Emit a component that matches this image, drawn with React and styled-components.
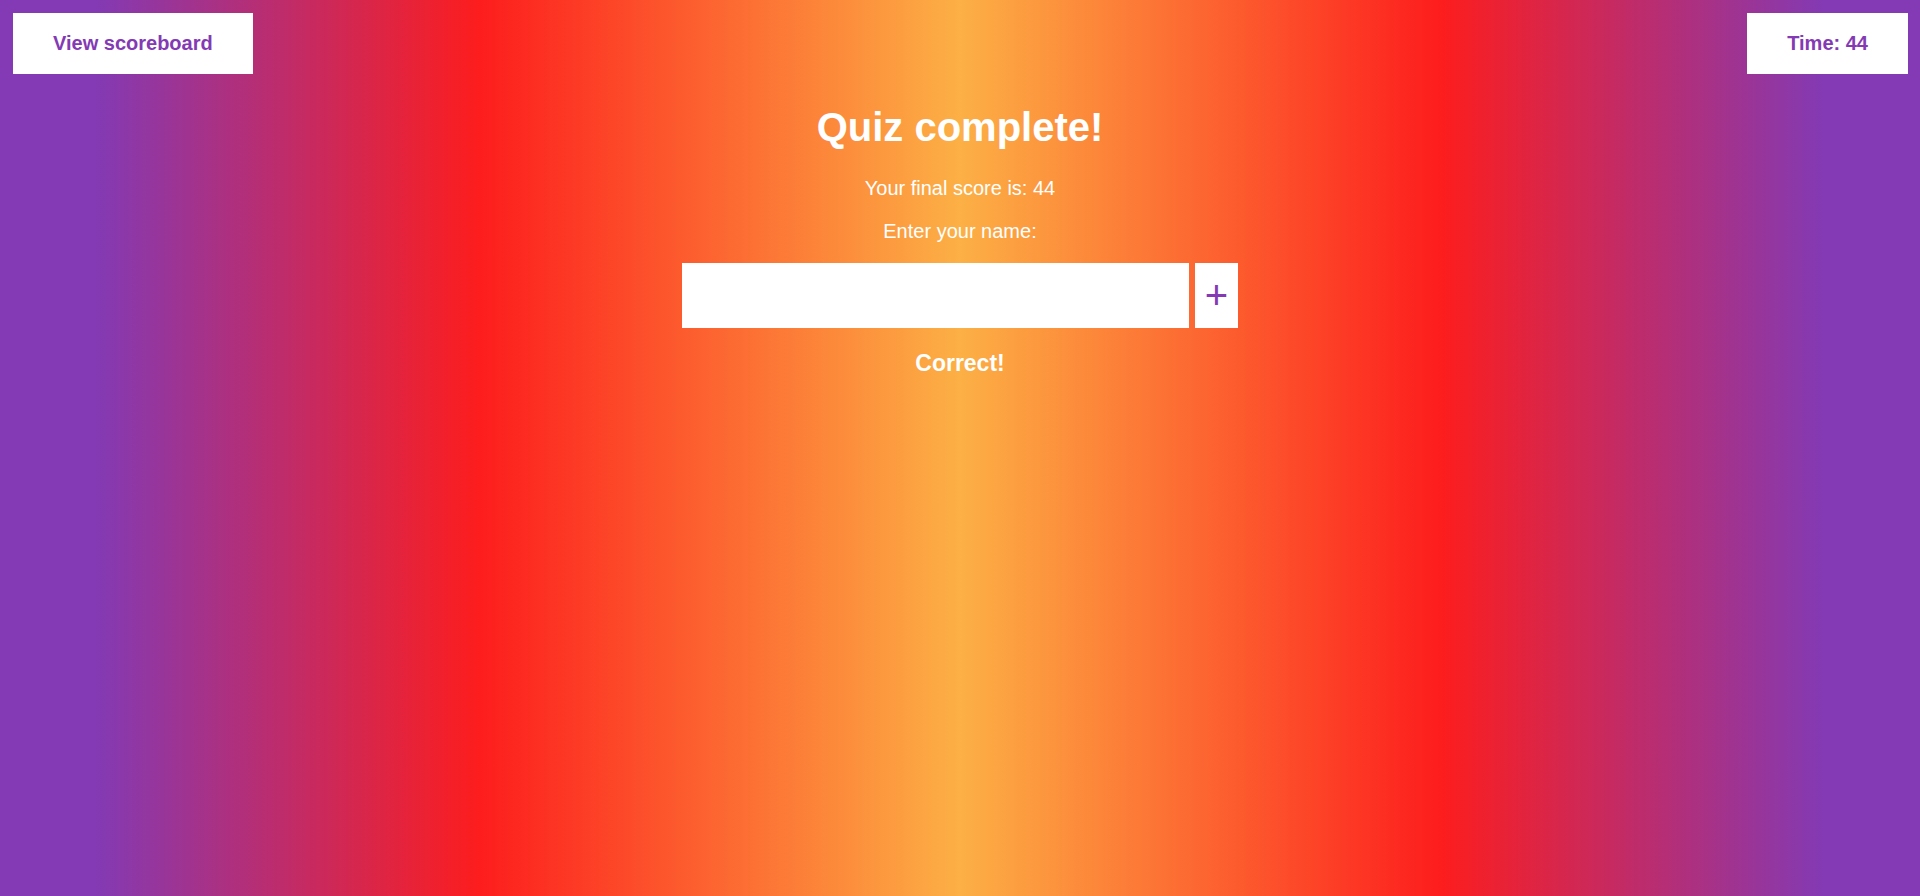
import React, { useState } from "react";
import styled, { createGlobalStyle } from "styled-components";

const GlobalStyle = createGlobalStyle`
  * {
    box-sizing: border-box;
  }

  body {
    margin: 0;
    font-family: Arial, "Liberation Sans", sans-serif;
    font-size: 20px;
    line-height: 23px;
    color: #ffffff;
  }
`;

const Page = styled.div`
  min-height: 100vh;
  background: linear-gradient(
    90deg,
    #833ab4 5%,
    #fd1d1d 25%,
    #fcb045 50%,
    #fd1d1d 75%,
    #833ab4 95%
  );
`;

const TopBar = styled.header`
  display: flex;
  justify-content: space-between;
  align-items: center;
  padding: 13px 12px 0 13px;
`;

const ScoreboardButton = styled.button`
  height: 61px;
  padding: 0 40px;
  border: 0;
  background: #ffffff;
  color: #833ab4;
  font: inherit;
  font-weight: bold;
  cursor: pointer;
`;

const Timer = styled.div`
  padding: 19px 40px;
  background: #ffffff;
  color: #833ab4;
  font-weight: bold;
`;

const Result = styled.main`
  display: flex;
  flex-direction: column;
  align-items: center;
  gap: 20px;
  padding: 30px 20px;
  text-align: center;
`;

const Title = styled.h1`
  margin: 0 0 7px;
  font-size: 40px;
  line-height: 46px;
`;

const Text = styled.p`
  margin: 0;
`;

const NameForm = styled.form`
  display: flex;
  flex-direction: column;
  align-items: center;
  gap: 20px;
  width: 100%;
  max-width: 556px;
`;

const FieldRow = styled.div`
  display: flex;
  gap: 6px;
  width: 100%;
`;

const NameInput = styled.input`
  flex: 1;
  min-width: 0;
  height: 65px;
  padding: 10px;
  border: 0;
  border-radius: 0;
  background: #ffffff;
  color: #833ab4;
  font: inherit;
  font-size: 40px;
`;

const AddButton = styled.button`
  padding: 10px;
  border: 0;
  background: #ffffff;
  color: #833ab4;
  font: inherit;
  font-size: 40px;
  line-height: 45px;
  cursor: pointer;
`;

const Feedback = styled.h2`
  margin: 2px 0 0;
  font-size: 23px;
  line-height: 27px;
`;

export default function App() {
  const [name, setName] = useState("");
  const score = 44;

  return (
    <>
      <GlobalStyle />
      <Page>
        <TopBar>
          <ScoreboardButton type="button">View scoreboard</ScoreboardButton>
          <Timer>Time: {score}</Timer>
        </TopBar>
        <Result>
          <Title>Quiz complete!</Title>
          <Text>Your final score is: {score}</Text>
          <NameForm onSubmit={(event) => event.preventDefault()}>
            <label htmlFor="player-name">Enter your name:</label>
            <FieldRow>
              <NameInput
                id="player-name"
                type="text"
                value={name}
                onChange={(event) => setName(event.target.value)}
              />
              <AddButton type="submit">+</AddButton>
            </FieldRow>
          </NameForm>
          <Feedback>Correct!</Feedback>
        </Result>
      </Page>
    </>
  );
}
